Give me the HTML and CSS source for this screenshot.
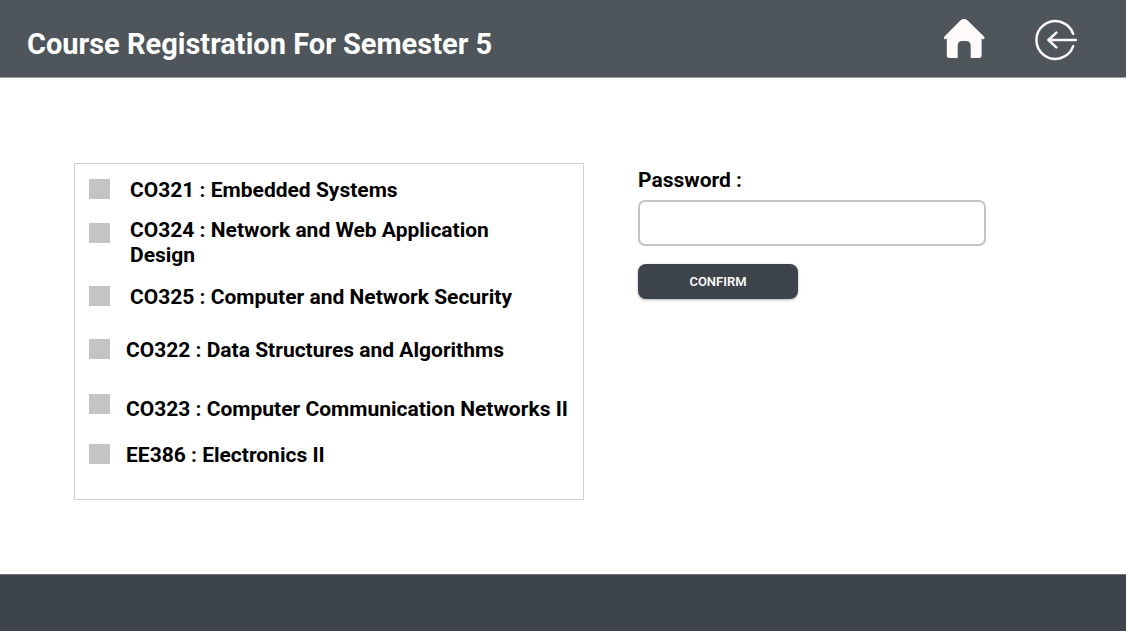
FILE: index.html
```html
<!DOCTYPE html>
<html lang="en">
<head>
  <meta charset="utf-8">
  <meta name="viewport" content="width=device-width, initial-scale=1">
  <title>Course Registration</title>
  <link rel="stylesheet" href="styles.css">
</head>
<body>
  <header class="topbar">
    <h1 class="title">Course Registration For Semester 5</h1>
    <nav class="nav">
      <a class="nav-link" href="#home" aria-label="Home">
        <svg class="icon" width="42" height="42" viewBox="0 0 42 42" aria-hidden="true">
          <path fill="#fffafa" d="M17.4 1.4Q21 -1.2 24.6 1.4L41 17.6Q42 18.8 41 20Q40.2 20.8 38.6 19.6V36.5Q38.6 39 35.9 39H27.7V27Q27.7 22 22.9 22H19.4Q14.7 22 14.7 27V39H6.5Q3.8 39 3.8 36.5V19.6Q2.2 20.8 1.4 20Q0.4 18.8 1.5 17.6Z"/>
        </svg>
      </a>
      <a class="nav-link" href="#logout" aria-label="Log out">
        <svg class="icon" width="42" height="42" viewBox="0 0 42 42" fill="none" stroke="#fffafa" stroke-width="2.5" stroke-linecap="round" stroke-linejoin="round" aria-hidden="true">
          <path d="M38.2 14.8A18.9 18.9 0 1 0 38.2 27.2"/>
          <path d="M41 21H13.4M21.4 13.6L13.4 21L21.4 28.4"/>
        </svg>
      </a>
    </nav>
  </header>
  <main class="content">
    <form class="registration">
      <fieldset class="courses" aria-label="Courses">
        <label class="course"><input class="box" type="checkbox"><span class="name">CO321 : Embedded Systems</span></label>
        <label class="course course--wrapped"><input class="box" type="checkbox"><span class="name">CO324 : Network and Web Application Design</span></label>
        <label class="course"><input class="box" type="checkbox"><span class="name">CO325 : Computer and Network Security</span></label>
        <label class="course course--near course--spaced"><input class="box" type="checkbox"><span class="name">CO322 : Data Structures and Algorithms</span></label>
        <label class="course course--near course--spaced course--low"><input class="box" type="checkbox"><span class="name">CO323 : Computer Communication Networks II</span></label>
        <label class="course course--near"><input class="box" type="checkbox"><span class="name">EE386 : Electronics II</span></label>
      </fieldset>
      <div class="confirmation">
        <label class="password-label" for="password">Password :</label>
        <input class="password" id="password" type="password">
        <button class="confirm" type="button">CONFIRM</button>
      </div>
    </form>
  </main>
  <footer class="footer"></footer>
</body>
</html>
```

FILE: styles.css
```css
* {
  box-sizing: border-box;
}

body {
  margin: 0;
  min-height: 100vh;
  display: flex;
  flex-direction: column;
  background: #fff;
  color: #000;
  font-family: Roboto, "Liberation Sans", sans-serif;
}

.topbar {
  display: flex;
  align-items: flex-start;
  justify-content: space-between;
  padding: 19px 49px 15px 27px;
  background: #4e555b;
  border-bottom: 1px solid #9b9fa3;
}

.title {
  margin: 7px 0 0;
  color: #fff;
  font-size: 29px;
  font-weight: 700;
  line-height: 36px;
}

.nav {
  display: flex;
  gap: 50px;
}

.nav-link,
.icon {
  display: block;
}

.content {
  flex: 1;
  padding: 85px 74px 72px;
}

.registration {
  display: grid;
  grid-template-columns: 510fr 348fr;
  column-gap: 54px;
  margin-right: 66px;
  align-items: start;
}

.courses {
  display: flex;
  flex-direction: column;
  gap: 15px;
  min-width: 0;
  margin: 0;
  padding: 14px 8px 31px 14px;
  border: 1px solid #d0d0d0;
}

.course {
  display: flex;
  align-items: flex-start;
  gap: 20px;
  font-size: 21px;
  font-weight: 700;
  line-height: 25px;
}

.course--wrapped {
  margin-bottom: 2px;
  padding-right: 60px;
}

.course--near {
  gap: 16px;
}

.course--spaced {
  margin-top: 13px;
}

.course--low .name {
  padding-top: 6px;
}

.course:last-child {
  margin-top: 6px;
}

.box {
  flex: none;
  appearance: none;
  width: 21px;
  height: 20px;
  margin: 1px 0 0;
  background: #c4c4c4;
}

.course--wrapped .box {
  margin-top: 5px;
}

.course--low .box {
  margin-top: 3px;
}

.box:checked {
  background: #3d444b;
}

.confirmation {
  display: flex;
  flex-direction: column;
  align-items: flex-start;
  padding-top: 5px;
}

.password-label {
  font-size: 21px;
  font-weight: 700;
  line-height: 25px;
}

.password {
  width: 100%;
  height: 46px;
  margin: 7px 0 18px;
  padding: 0 12px;
  border: 2px solid #c4c4c4;
  border-radius: 7px;
  background: #fff;
  font: inherit;
}

.confirm {
  width: 160px;
  height: 35px;
  padding: 0;
  border: 0;
  border-radius: 8px;
  background: #3d444b;
  box-shadow: 0 1px 3px rgba(0, 0, 0, 0.3);
  color: #fffafa;
  font-family: inherit;
  font-size: 13px;
  font-weight: 600;
}

.footer {
  height: 57px;
  background: #3d444b;
  border-top: 1px solid #6d7378;
}
```
